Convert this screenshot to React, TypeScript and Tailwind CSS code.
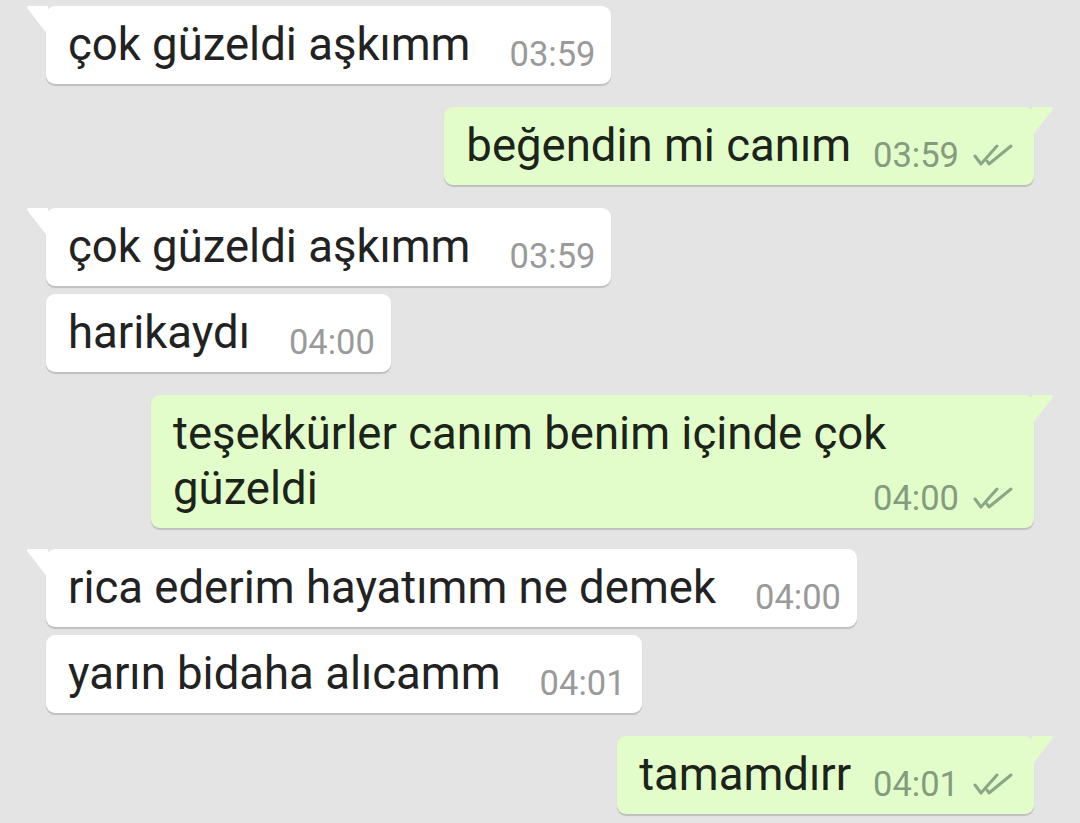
import React from "react";

type Msg = {
  lines: string[];
  time: string;
  out?: boolean;
  tail?: boolean;
  gap: string;
};

const messages: Msg[] = [
  { lines: ["çok güzeldi aşkımm"], time: "03:59", tail: true, gap: "mt-[6px]" },
  { lines: ["beğendin mi canım"], time: "03:59", out: true, tail: true, gap: "mt-[23px]" },
  { lines: ["çok güzeldi aşkımm"], time: "03:59", tail: true, gap: "mt-[23px]" },
  { lines: ["harikaydı"], time: "04:00", gap: "mt-[8px]" },
  { lines: ["teşekkürler canım benim içinde çok", "güzeldi"], time: "04:00", out: true, tail: true, gap: "mt-[23px]" },
  { lines: ["rica ederim hayatımm ne demek"], time: "04:00", tail: true, gap: "mt-[21px]" },
  { lines: ["yarın bidaha alıcamm"], time: "04:01", gap: "mt-[8px]" },
  { lines: ["tamamdırr"], time: "04:01", out: true, tail: true, gap: "mt-[23px]" },
];

const Ticks = () => (
  <svg width="42" height="26" viewBox="0 0 42 26" className="ml-[14px] mb-[4px]" fill="none">
    <path d="M2 13 L8 21 L24 3" stroke="#8ca787" strokeWidth="3" strokeLinecap="round" strokeLinejoin="round" />
    <path d="M14 18 L16 21 L38 3" stroke="#8ca787" strokeWidth="3" strokeLinecap="round" strokeLinejoin="round" />
  </svg>
);

const Bubble = ({ m }: { m: Msg }) => {
  const bg = m.out ? "bg-[#e2fdc9]" : "bg-white";
  const textCls = `text-[45.5px] leading-[55px] whitespace-nowrap ${m.out ? "text-[#1b231a]" : "text-[#222]"}`;
  const timeCls = `text-[34.5px] leading-[34px] mb-[1px] ${m.out ? "text-[#849b80]" : "text-[#9a9a9a]"}`;
  const first = m.lines.slice(0, -1);
  const last = m.lines[m.lines.length - 1];

  return (
    <div className={`relative ${m.gap} ${m.out ? "self-end mr-[46px]" : "self-start ml-[46px]"}`}>
      {m.tail && !m.out && (
        <svg width="22" height="30" viewBox="0 0 22 30" className="absolute -left-[20px] top-0">
          <path d="M22 0 L3 0 Q0 0 1.5 2.5 L22 29 Z" fill="#ffffff" />
        </svg>
      )}
      {m.tail && m.out && (
        <svg width="22" height="30" viewBox="0 0 22 30" className="absolute -right-[20px] top-0">
          <path d="M0 0 L19 0 Q22 0 20.5 2.5 L0 29 Z" fill="#e2fdc9" />
        </svg>
      )}
      <div
        className={`${bg} rounded-[9px] shadow-[0_1.5px_1px_rgba(0,0,0,0.16)] pl-[22px] ${
          m.out ? "pr-[19px]" : "pr-[16px]"
        } pt-[11px] pb-[12px] ${first.length ? "w-[883px]" : ""}`}
      >
        {first.map((l, i) => (
          <div key={i} className={textCls}>
            {l}
          </div>
        ))}
        <div className="flex items-end">
          <span className={textCls}>{last}</span>
          <span className={`${m.out ? "ml-[22px]" : "ml-[39px]"} ${first.length ? "ml-auto" : ""} ${timeCls}`}>
            {m.time}
          </span>
          {m.out && <Ticks />}
        </div>
      </div>
    </div>
  );
};

export default function App() {
  return (
    <div
      className="w-[1080px] h-[823px] overflow-hidden bg-[#e4e4e4] flex flex-col"
      style={{ fontFamily: "Roboto, 'Noto Sans', sans-serif" }}
    >
      {messages.map((m, i) => (
        <Bubble key={i} m={m} />
      ))}
    </div>
  );
}
